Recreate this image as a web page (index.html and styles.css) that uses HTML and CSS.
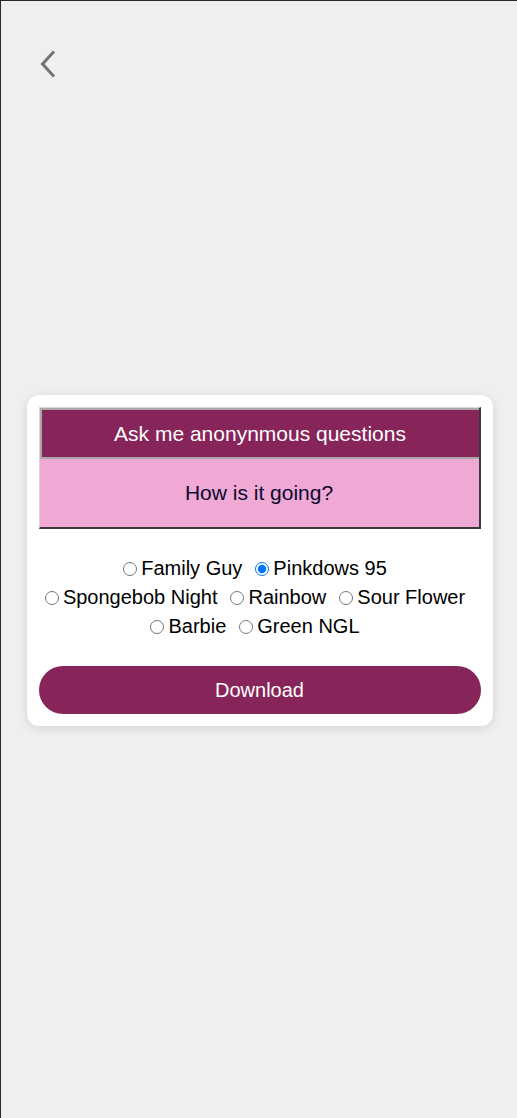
FILE: index.html
```html
<!DOCTYPE html>
<html>
<head>
<meta charset="utf-8">
<link rel="stylesheet" href="styles.css">
</head>
<body>
<div class="page">
  <header class="topbar">
    <button class="back" aria-label="Back">
      <svg width="20" height="30" viewBox="0 0 20 30"><path d="M14 3.5 L3.5 15 L14 26.5" fill="none" stroke="#707478" stroke-width="3" stroke-linecap="square"/></svg>
    </button>
  </header>
  <main class="center">
    <section class="card">
      <div class="winbox">
        <div class="winhead">Ask me anonynmous questions</div>
        <div class="winbody">How is it going?</div>
      </div>
      <div class="themes">
        <label class="opt"><input type="radio" name="t">Family Guy</label>
        <label class="opt"><input type="radio" name="t" checked>Pinkdows 95</label>
        <label class="opt"><input type="radio" name="t">Spongebob Night</label>
        <label class="opt"><input type="radio" name="t">Rainbow</label>
        <label class="opt"><input type="radio" name="t">Sour Flower</label>
        <label class="opt"><input type="radio" name="t">Barbie</label>
        <label class="opt"><input type="radio" name="t">Green NGL</label>
      </div>
      <button class="download">Download</button>
    </section>
  </main>
</div>
</body>
</html>
```
FILE: styles.css
```css
html, body {
  margin: 0;
  padding: 0;
}
body {
  background: #efefef;
  font-family: "Liberation Sans", Arial, sans-serif;
}
.page {
  height: 1118px;
  box-sizing: border-box;
  border-top: 1px solid #2a2a2a;
  border-left: 1px solid #2a2a2a;
  display: flex;
  flex-direction: column;
}
.topbar {
  height: 0;
}
.back {
  background: none;
  border: 0;
  padding: 0;
  margin: 48px 0 0 38px;
  display: block;
  cursor: pointer;
}
.back svg { display: block; }
.center {
  flex: 1;
  display: flex;
  align-items: center;
  justify-content: center;
  padding-left: 1px;
  padding-top: 2px;
}
.card {
  width: 466px;
  box-sizing: border-box;
  background: #fff;
  border-radius: 12px;
  box-shadow: 0 2px 10px rgba(0,0,0,0.12);
  padding: 12px 12px 12px 12px;
}
.winbox {
  border-right: 2px solid #3a3a3a;
  border-bottom: 2px solid #3a3a3a;
  border-top: 1px solid #d8d8d8;
  border-left: 1px solid #d8d8d8;
  background: #f0a8d4;
}
.winhead {
  background: #87245a;
  color: #fff;
  border: 2px solid #a8a8a8;
  border-right: 0;
  height: 47px;
  line-height: 47px;
  text-align: center;
  font-size: 21px;
}
.winbody {
  height: 68px;
  line-height: 68px;
  text-align: center;
  color: #0b0830;
  font-size: 21px;
}
.themes {
  margin: 25px -4px 25px 0;
  display: flex;
  flex-wrap: wrap;
  justify-content: center;
  font-size: 20px;
  line-height: 29px;
  color: #000;
}
.opt {
  display: inline-flex;
  align-items: center;
  margin-right: 13px;
  white-space: nowrap;
}
.opt input {
  margin: 1px 4px 0 0;
  width: 14px;
  height: 14px;
}
.download {
  display: block;
  width: 100%;
  height: 48px;
  border: 0;
  border-radius: 24px;
  background: #87245a;
  color: #fff;
  font-family: "Liberation Sans", Arial, sans-serif;
  font-size: 20px;
  cursor: pointer;
}
```
